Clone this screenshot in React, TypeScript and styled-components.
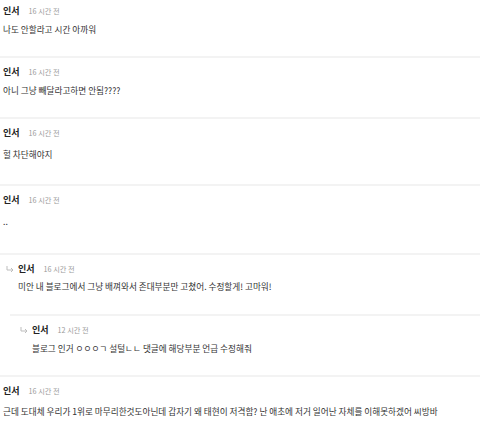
import React from "react";
import styled, { createGlobalStyle } from "styled-components";

const Global = createGlobalStyle`
  html, body { margin: 0; padding: 0; background: #ffffff; }
  body { font-family: "Noto Sans CJK KR", "Noto Sans", sans-serif; overflow: hidden; }
`;

const List = styled.div`
  width: 480px;
  margin-top: -3px;
  display: flex;
  flex-direction: column;
`;

const Item = styled.div<{ $indent: number; $inset: number; $gap: number; $bottom: number; $line: boolean }>`
  display: flex;
  flex-direction: column;
  padding: 8px 0 ${(p) => p.$bottom}px ${(p) => p.$indent}px;
  margin-left: ${(p) => p.$inset}px;
  border-bottom: ${(p) => (p.$line ? "2px solid #f3f3f3" : "none")};
  gap: ${(p) => p.$gap}px;
`;

const Header = styled.div<{ $shift: number }>`
  display: flex;
  align-items: center;
  height: 12px;
  margin-left: ${(p) => p.$shift}px;
`;

const Arrow = styled.svg`
  width: 8px;
  height: 6px;
  flex: none;
  margin-right: 4px;
`;

const Name = styled.span`
  font-size: 9px;
  font-weight: 700;
  color: #222;
  line-height: 12px;
  margin-right: 9px;
`;

const Time = styled.span`
  font-size: 7.2px;
  color: #9a9a9a;
  line-height: 12px;
`;

const Body = styled.div<{ $pad: number }>`
  font-size: 8.65px;
  color: #333;
  line-height: 12px;
  white-space: nowrap;
  padding-left: ${(p) => p.$pad}px;
`;

type C = {
  time: string;
  text: string;
  level: 0 | 1 | 2;
  gap: number;
  bottom: number;
  line: boolean;
};

const data: C[] = [
  { time: "16 시간 전", text: "나도 안할라고 시간 아까워", level: 0, gap: 6, bottom: 21, line: true },
  { time: "16 시간 전", text: "아니 그냥 빼달라고하면 안됨????", level: 0, gap: 6, bottom: 21, line: true },
  { time: "16 시간 전", text: "헐 차단해야지", level: 0, gap: 9, bottom: 24, line: true },
  { time: "16 시간 전", text: "..", level: 0, gap: 9, bottom: 26, line: true },
  { time: "16 시간 전", text: "미안 내 블로그에서 그냥 배껴와서 존대부분만 고쳤어. 수정할게! 고마워!", level: 1, gap: 5, bottom: 22, line: true },
  { time: "12 시간 전", text: "블로그 인거 ㅇㅇㅇㄱ 설털ㄴㄴ 댓글에 해당부분 언급 수정해줘", level: 2, gap: 6, bottom: 21, line: true },
  { time: "16 시간 전", text: "근데 도대체 우리가 1위로 마무리한것도아닌데 갑자기 왜 태현이 저격함? 난 애초에 저거 일어난 자체를 이해못하겠어 씨방바", level: 0, gap: 8, bottom: 20, line: false },
];

const layout = {
  0: { inset: 0, indent: 3, shift: 0, pad: 0 },
  1: { inset: 10, indent: 0, shift: -4, pad: 8 },
  2: { inset: 0, indent: 20, shift: 0, pad: 12 },
} as const;

const ReplyArrow = () => (
  <Arrow viewBox="0 0 8 6">
    <path d="M1 0 V4 H7" fill="none" stroke="#bdbdbd" strokeWidth="1" />
    <path d="M5 2 L7 4 L5 6" fill="none" stroke="#bdbdbd" strokeWidth="1" />
  </Arrow>
);

export default function App() {
  return (
    <>
      <Global />
      <List>
        {data.map((c, i) => {
          const l = layout[c.level];
          return (
            <Item
              key={i}
              $indent={l.indent}
              $inset={l.inset}
              $gap={c.gap}
              $bottom={c.bottom}
              $line={c.line}
            >
              <Header $shift={l.shift}>
                {c.level > 0 && <ReplyArrow />}
                <Name>인서</Name>
                <Time>{c.time}</Time>
              </Header>
              <Body $pad={l.pad}>{c.text}</Body>
            </Item>
          );
        })}
      </List>
    </>
  );
}
